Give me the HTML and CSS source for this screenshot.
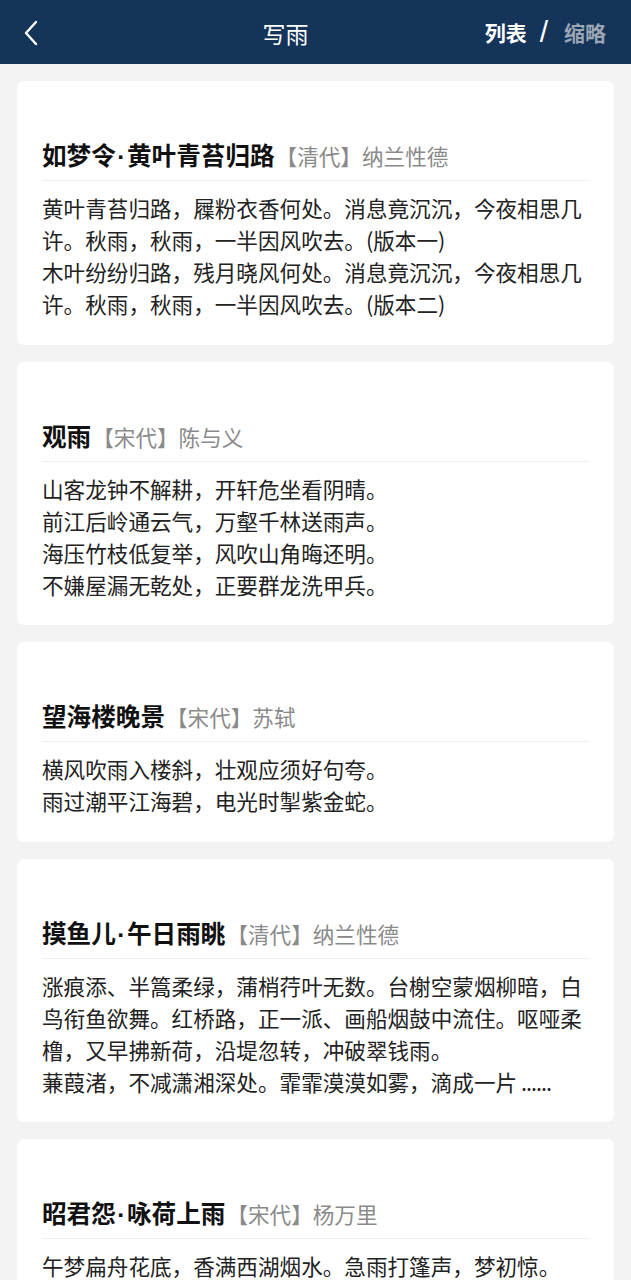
FILE: index.html
```html
<!DOCTYPE html>
<html lang="zh-CN">
<head>
<meta charset="utf-8">
<title>写雨</title>
<link rel="stylesheet" href="styles.css">
</head>
<body>
<header class="topbar">
  <div class="back">
    <svg width="16" height="26" viewBox="0 0 16 26"><path d="M13 2 L3 13 L13 24" fill="none" stroke="#ffffff" stroke-width="2.4" stroke-linecap="round" stroke-linejoin="round"/></svg>
  </div>
  <div class="title">写雨</div>
  <div class="tabs">
    <span class="tab active">列表</span>
    <span class="slash">/</span>
    <span class="tab">缩略</span>
  </div>
</header>
<main class="list">
  <section class="card">
    <h2 class="head"><span class="name">如梦令<span class="dot">·</span>黄叶青苔归路</span><span class="meta">【清代】纳兰性德</span></h2>
    <div class="body">
      <p>黄叶青苔归路，屧粉衣香何处。消息竟沉沉，今夜相思几许。秋雨，秋雨，一半因风吹去。(版本一)</p>
      <p>木叶纷纷归路，残月晓风何处。消息竟沉沉，今夜相思几许。秋雨，秋雨，一半因风吹去。(版本二)</p>
    </div>
  </section>
  <section class="card">
    <h2 class="head"><span class="name">观雨</span><span class="meta">【宋代】陈与义</span></h2>
    <div class="body">
      <p>山客龙钟不解耕，开轩危坐看阴晴。</p>
      <p>前江后岭通云气，万壑千林送雨声。</p>
      <p>海压竹枝低复举，风吹山角晦还明。</p>
      <p>不嫌屋漏无乾处，正要群龙洗甲兵。</p>
    </div>
  </section>
  <section class="card">
    <h2 class="head"><span class="name">望海楼晚景</span><span class="meta">【宋代】苏轼</span></h2>
    <div class="body">
      <p>横风吹雨入楼斜，壮观应须好句夸。</p>
      <p>雨过潮平江海碧，电光时掣紫金蛇。</p>
    </div>
  </section>
  <section class="card">
    <h2 class="head"><span class="name">摸鱼儿<span class="dot">·</span>午日雨眺</span><span class="meta">【清代】纳兰性德</span></h2>
    <div class="body">
      <p>涨痕添、半篙柔绿，蒲梢荇叶无数。台榭空蒙烟柳暗，白鸟衔鱼欲舞。红桥路，正一派、画船烟鼓中流住。呕哑柔橹，又早拂新荷，沿堤忽转，冲破翠钱雨。</p>
      <p>蒹葭渚，不减潇湘深处。霏霏漠漠如雾，滴成一片<span class="dots">......</span></p>
    </div>
  </section>
  <section class="card">
    <h2 class="head"><span class="name">昭君怨<span class="dot">·</span>咏荷上雨</span><span class="meta">【宋代】杨万里</span></h2>
    <div class="body">
      <p>午梦扁舟花底，香满西湖烟水。急雨打篷声，梦初惊。</p>
      <p>却是池荷跳雨，散了真珠还聚。聚作水银窝，泻清波。</p>
    </div>
  </section>
</main>
</body>
</html>
```

FILE: styles.css
```css
* { box-sizing: border-box; }
html, body {
  margin: 0;
  padding: 0;
  background: #f3f3f3;
  font-family: "Noto Sans CJK SC", "Noto Sans", sans-serif;
}
.topbar {
  height: 64px;
  background: #15345a;
  display: flex;
  align-items: center;
  color: #ffffff;
}
.back {
  width: 110px;
  padding-left: 23px;
  display: flex;
  align-items: center;
  padding-top: 1px;
}
.back svg { display: block; }
.title {
  flex: 1;
  text-align: center;
  font-size: 23px;
  line-height: 30px;
  color: #ffffff;
  padding-top: 2px;
}
.tabs {
  width: 170px;
  display: flex;
  align-items: center;
  justify-content: flex-end;
  padding-right: 25px;
}
.tab {
  font-size: 21px;
  font-weight: 700;
  line-height: 30px;
  color: #9ba6b5;
}
.tab.active { color: #ffffff; }
.slash {
  font-family: "Liberation Sans", sans-serif;
  font-size: 30px;
  line-height: 30px;
  color: #ffffff;
  margin: 0 16px 0 13px;
}
.list {
  padding: 17px 17px 0 17px;
  display: flex;
  flex-direction: column;
  gap: 17px;
}
.card {
  background: #ffffff;
  border-radius: 7px;
  padding: 57px 25px 24.5px 25px;
}
.head {
  margin: 0;
  height: 43px;
  padding: 0 0 10px 0;
  border-bottom: 1px solid #efefef;
  line-height: 32px;
  font-weight: 400;
  display: flex;
  align-items: baseline;
  white-space: nowrap;
}
.name {
  font-size: 24.6px;
  font-weight: 700;
  color: #111111;
}
.dot {
  font-family: "Liberation Sans", sans-serif;
  font-weight: 700;
  margin: 0 1.5px;
}
.meta {
  font-size: 21.6px;
  color: #8a8a8a;
  margin-left: 1px;
}
.body {
  padding-top: 11px;
}
.body p {
  margin: 0;
  font-size: 21.6px;
  line-height: 32px;
  color: #222222;
}
.dots {
  letter-spacing: -1px;
  margin-left: 4px;
}
```
